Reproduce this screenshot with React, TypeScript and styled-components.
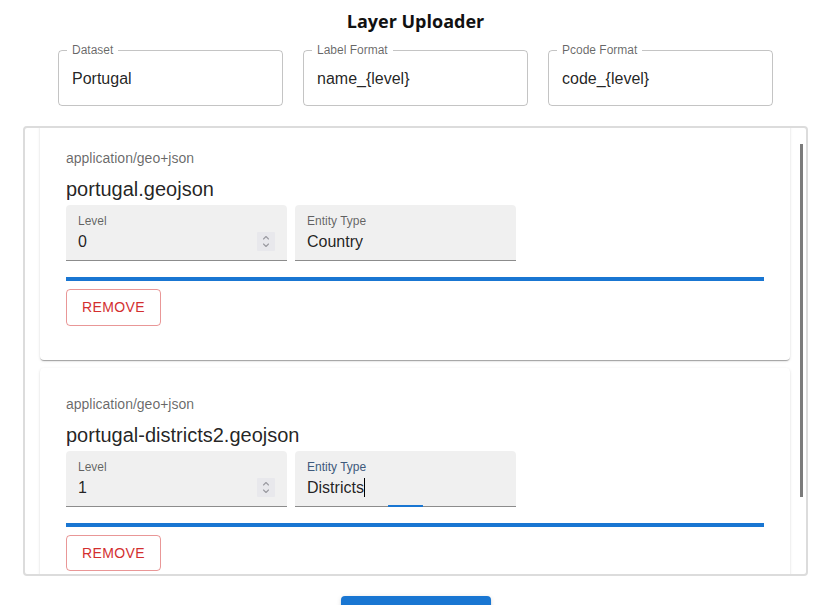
import React, { useEffect, useRef } from "react";
import styled, { createGlobalStyle } from "styled-components";

const Global = createGlobalStyle`
  html, body { margin: 0; padding: 0; background: #fff; }
  body { font-family: "Liberation Sans", Arial, Helvetica, sans-serif; color: rgba(0,0,0,0.87); }
  * { box-sizing: border-box; }
`;

const FONT = `"Liberation Sans", Arial, Helvetica, sans-serif`;

const Page = styled.div`
  padding: 9px 0 0 4px;
  width: 100%;
  display: flex;
  flex-direction: column;
  align-items: center;
  height: 605px;
  overflow: hidden;
`;

const Title = styled.h1`
  margin: 0;
  font-family: "Open Sans", "Noto Sans", sans-serif;
  font-weight: 700;
  font-size: 18px;
  line-height: 24px;
  color: #111;
`;

const TopRow = styled.div`
  display: grid;
  grid-template-columns: repeat(3, 225px);
  gap: 20px;
  margin-top: 17px;
`;

const Outlined = styled.div`
  position: relative;
  height: 56px;
  display: flex;
  align-items: center;
`;

const Fieldset = styled.fieldset`
  position: absolute;
  inset: -5px 0 0 0;
  margin: 0;
  padding: 0 8px;
  border: 1px solid rgba(0, 0, 0, 0.23);
  border-radius: 4px;
  pointer-events: none;
  text-align: left;
`;

const Legend = styled.legend`
  float: unset;
  width: auto;
  padding: 0;
  height: 11px;
  font-size: 12px;
  font-family: ${FONT};
  visibility: hidden;
  white-space: nowrap;
  & > span { padding: 0 5px; display: inline-block; }
`;

const OutlinedLabel = styled.label`
  position: absolute;
  left: 14px;
  top: -8px;
  font-size: 12px;
  line-height: 16px;
  color: rgba(0, 0, 0, 0.6);
`;

const OutlinedInput = styled.input`
  border: 0;
  outline: none;
  background: transparent;
  width: 100%;
  padding: 16.5px 14px;
  font: 400 16px/23px ${FONT};
  color: rgba(0, 0, 0, 0.87);
`;

const Frame = styled.div`
  position: relative;
  flex: none;
  margin-top: 20px;
  width: 785px;
  height: 450px;
  border: 2px solid #dcdcdc;
  border-radius: 4px;
  overflow: hidden;
`;

const Scroller = styled.div`
  height: 100%;
  overflow-y: scroll;
  scrollbar-width: none;
  padding: 16px 16px 64px 15px;
  display: flex;
  flex-direction: column;
  gap: 8px;
  &::-webkit-scrollbar { display: none; }
`;

const Thumb = styled.div`
  position: absolute;
  right: 3px;
  top: 16px;
  width: 3px;
  height: 353px;
  background: #7b7b7b;
`;

const Card = styled.div`
  flex: none;
  width: 750px;
  background: #fff;
  border-radius: 4px;
  box-shadow: 0px 2px 1px -1px rgba(0,0,0,0.2), 0px 1px 1px 0px rgba(0,0,0,0.14), 0px 1px 3px 0px rgba(0,0,0,0.12);
  padding: 26px 26px 34px;
  display: flex;
  flex-direction: column;
  align-items: flex-start;
`;

const Mime = styled.div`
  font-size: 14px;
  line-height: 20px;
  color: rgba(0, 0, 0, 0.6);
`;

const FileName = styled.div`
  margin-top: 6px;
  font-size: 20px;
  line-height: 31px;
  color: rgba(0, 0, 0, 0.87);
`;

const FieldRow = styled.div`
  display: flex;
  gap: 8px;
`;

const Filled = styled.div<{ $focus?: number }>`
  position: relative;
  width: 221px;
  height: 56px;
  background: rgba(0, 0, 0, 0.06);
  border-radius: 4px 4px 0 0;
  border-bottom: 1px solid rgba(0, 0, 0, 0.42);
  display: flex;
  align-items: flex-end;
  padding: 25px 12px 7px;
  &::after {
    content: "";
    position: absolute;
    left: 0;
    right: 0;
    bottom: -1px;
    height: 2px;
    background: #1976d2;
    transform: scaleX(${(p) => p.$focus ?? 0});
  }
`;

const FilledLabel = styled.label<{ $focused?: boolean }>`
  position: absolute;
  left: 12px;
  top: 8px;
  font-size: 12px;
  line-height: 16px;
  color: ${(p) => (p.$focused ? "#3e5a7c" : "rgba(0, 0, 0, 0.6)")};
`;

const FilledInput = styled.input`
  flex: 1;
  min-width: 0;
  border: 0;
  outline: none;
  background: transparent;
  padding: 0;
  height: 23px;
  font: 400 16px/23px ${FONT};
  color: rgba(0, 0, 0, 0.87);
  -moz-appearance: textfield;
  &::-webkit-inner-spin-button,
  &::-webkit-outer-spin-button {
    -webkit-appearance: none;
    margin: 0;
  }
`;

const Spinner = styled.div`
  flex: none;
  width: 18px;
  height: 19px;
  margin-bottom: 2px;
  background: #e8e8ec;
  border-radius: 1px;
  display: flex;
  align-items: center;
  justify-content: center;
`;

const FocusedValue = styled.div`
  height: 23px;
  font: 400 16px/23px ${FONT};
  color: rgba(0, 0, 0, 0.87);
  display: flex;
  align-items: center;
  white-space: pre;
`;

const Caret = styled.span`
  display: inline-block;
  width: 1px;
  height: 19px;
  background: #000;
`;

const Bar = styled.div`
  margin-top: 16px;
  width: 100%;
  height: 4px;
  background: #1976d2;
`;

const RemoveButton = styled.button`
  margin-top: 8px;
  height: 36.5px;
  padding: 5px 15px;
  border: 1px solid rgba(211, 47, 47, 0.5);
  border-radius: 4px;
  background: transparent;
  color: #d32f2f;
  font: 400 14px/24.5px ${FONT};
  letter-spacing: 0.4px;
  text-transform: uppercase;
  cursor: pointer;
`;

const UploadButton = styled.button`
  margin-top: 20px;
  flex: none;
  width: 150px;
  height: 36.5px;
  border: 0;
  border-radius: 4px;
  background: #1976d2;
  color: #fff;
  font: 400 14px/24.5px ${FONT};
  letter-spacing: 0.4px;
  text-transform: uppercase;
  box-shadow: 0px 3px 1px -2px rgba(0,0,0,0.2), 0px 2px 2px 0px rgba(0,0,0,0.14), 0px 1px 5px 0px rgba(0,0,0,0.12);
`;

function SpinIcon() {
  return (
    <svg width="10" height="15" viewBox="0 0 10 15" fill="none" stroke="#9a9aa0" strokeWidth="1.1" strokeLinecap="round" strokeLinejoin="round">
      <path d="M2.5 5 L5 2.5 L7.5 5" />
      <path d="M2.5 10 L5 12.5 L7.5 10" />
    </svg>
  );
}

function OutlinedField({ label, value }: { label: string; value: string }) {
  return (
    <Outlined>
      <OutlinedLabel>{label}</OutlinedLabel>
      <OutlinedInput defaultValue={value} />
      <Fieldset aria-hidden>
        <Legend>
          <span>{label}</span>
        </Legend>
      </Fieldset>
    </Outlined>
  );
}

type Layer = { mime: string; name: string; level: number; entity: string; focused?: boolean };

const layers: Layer[] = [
  { mime: "application/geo+json", name: "portugal.geojson", level: 0, entity: "Country" },
  { mime: "application/geo+json", name: "portugal-districts2.geojson", level: 1, entity: "Districts", focused: true },
];

function LayerCard({ layer }: { layer: Layer }) {
  return (
    <Card>
      <Mime>{layer.mime}</Mime>
      <FileName>{layer.name}</FileName>
      <FieldRow>
        <Filled>
          <FilledLabel>Level</FilledLabel>
          <FilledInput type="number" defaultValue={layer.level} />
          <Spinner>
            <SpinIcon />
          </Spinner>
        </Filled>
        <Filled $focus={layer.focused ? 0.158 : 0}>
          <FilledLabel $focused={layer.focused}>Entity Type</FilledLabel>
          {layer.focused ? (
            <FocusedValue>
              {layer.entity}
              <Caret />
            </FocusedValue>
          ) : (
            <FilledInput defaultValue={layer.entity} />
          )}
        </Filled>
      </FieldRow>
      <Bar />
      <RemoveButton>Remove</RemoveButton>
    </Card>
  );
}

export default function App() {
  const scrollRef = useRef<HTMLDivElement>(null);
  useEffect(() => {
    if (scrollRef.current) scrollRef.current.scrollTop = 22;
  }, []);
  return (
    <>
      <Global />
      <Page>
        <Title>Layer Uploader</Title>
        <TopRow>
          <OutlinedField label="Dataset" value="Portugal" />
          <OutlinedField label="Label Format" value="name_{level}" />
          <OutlinedField label="Pcode Format" value="code_{level}" />
        </TopRow>
        <Frame>
          <Scroller ref={scrollRef}>
            {layers.map((l) => (
              <LayerCard key={l.name} layer={l} />
            ))}
          </Scroller>
          <Thumb />
        </Frame>
        <UploadButton>Upload</UploadButton>
      </Page>
    </>
  );
}
